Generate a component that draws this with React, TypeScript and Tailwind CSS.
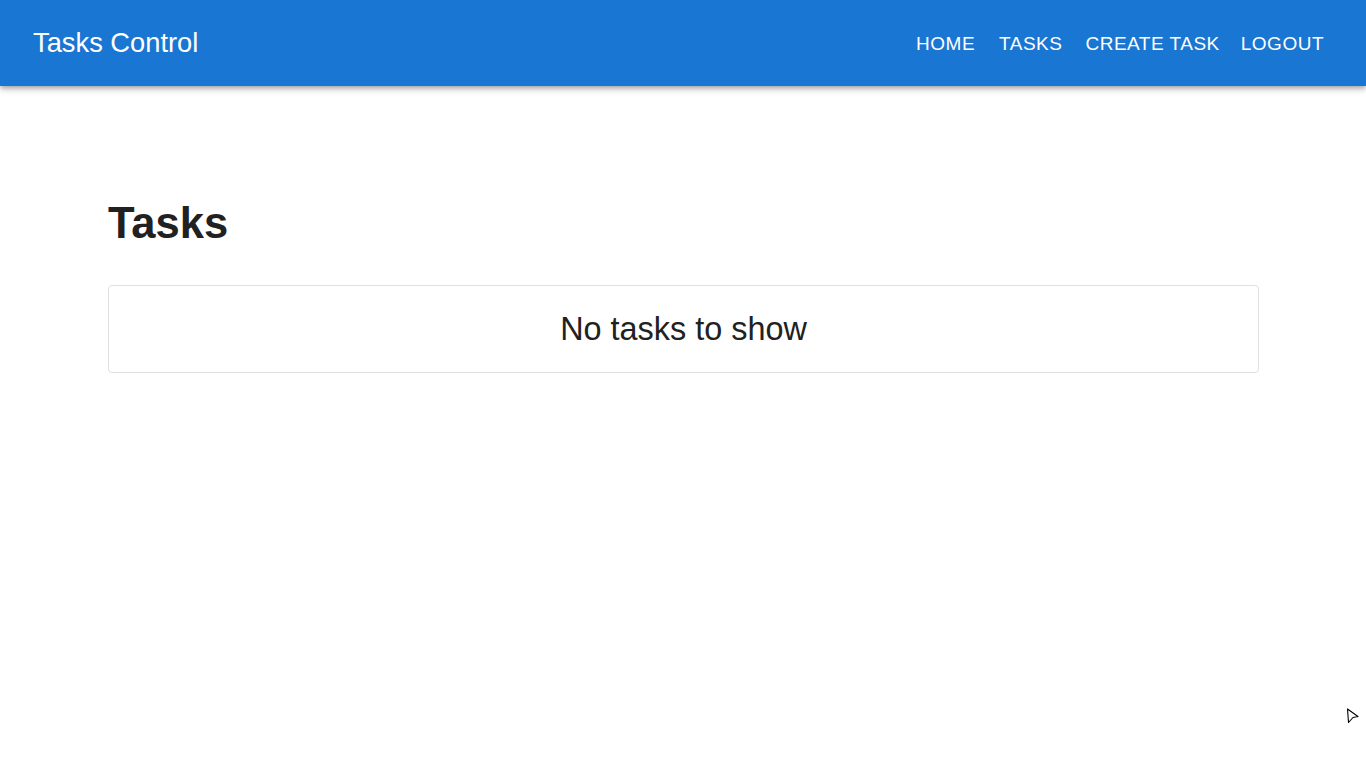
import React from "react";

export default function App() {
  const font = { fontFamily: '"Liberation Sans", Arial, sans-serif' };
  return (
    <div className="min-h-[768px] bg-white relative" style={font}>
      <header className="h-[86px] bg-[#1976d2] shadow-[0_2px_4px_-1px_rgba(0,0,0,0.2),0_4px_5px_0_rgba(0,0,0,0.14),0_1px_10px_0_rgba(0,0,0,0.12)] flex items-center justify-between pl-[33px] pr-[42px] text-white">
        <div className="text-[27.3px] leading-none">Tasks Control</div>
        <nav className="flex items-center text-[19px] tracking-[0.5px] pt-[2px]">
          <span>HOME</span>
          <span className="ml-[24px]">TASKS</span>
          <span className="ml-[23px]">CREATE TASK</span>
          <span className="ml-[21px]">LOGOUT</span>
        </nav>
      </header>
      <main className="mx-auto max-w-[1200px] pl-[25px] pr-[24px] pt-[112px]">
        <h1 className="text-[43.5px] font-bold leading-[50px] text-[#212121]">Tasks</h1>
        <div className="mt-[37px] h-[88px] border border-[#e0e0e0] rounded flex items-center justify-center">
          <span className="text-[32.4px] text-[#212121]">No tasks to show</span>
        </div>
      </main>
      <svg className="absolute left-[1345px] top-[707px]" width="16" height="18" viewBox="0 0 16 18">
        <path d="M2.5 2 L13 9.5 L8 10.5 L3.5 15.5 Z" fill="white" stroke="black" strokeWidth="1.1" strokeLinejoin="round" />
      </svg>
    </div>
  );
}
